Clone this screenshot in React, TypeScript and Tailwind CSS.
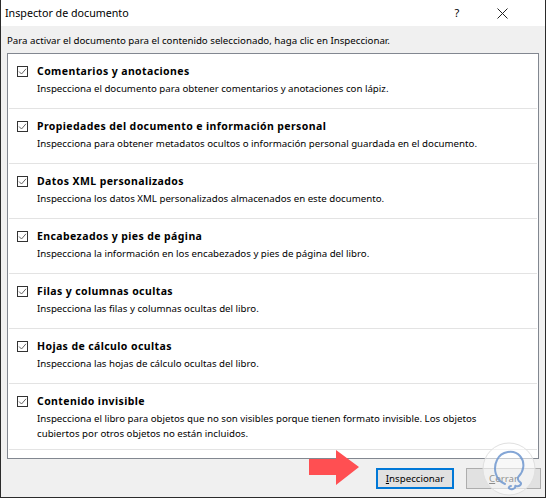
import React from "react";

const items = [
  { t: "Comentarios y anotaciones", d: ["Inspecciona el documento para obtener comentarios y anotaciones con lápiz."] },
  { t: "Propiedades del documento e información personal", d: ["Inspecciona para obtener metadatos ocultos o información personal guardada en el documento."] },
  { t: "Datos XML personalizados", d: ["Inspecciona los datos XML personalizados almacenados en este documento."] },
  { t: "Encabezados y pies de página", d: ["Inspecciona la información en los encabezados y pies de página del libro."] },
  { t: "Filas y columnas ocultas", d: ["Inspecciona las filas y columnas ocultas del libro."] },
  { t: "Hojas de cálculo ocultas", d: ["Inspecciona las hojas de cálculo ocultas del libro."] },
  {
    t: "Contenido invisible",
    d: [
      "Inspecciona el libro para objetos que no son visibles porque tienen formato invisible. Los objetos",
      "cubiertos por otros objetos no están incluidos.",
    ],
  },
];

function Check() {
  return (
    <div className="w-[11px] h-[11px] border border-[#333] bg-white flex items-center justify-center shrink-0">
      <svg width="9" height="9" viewBox="0 0 9 9">
        <path d="M1 4.5 L3.5 7 L8 1.8" fill="none" stroke="#666" strokeWidth="1" />
      </svg>
    </div>
  );
}

export default function App() {
  return (
    <div
      className="w-[546px] h-[498px] bg-[#f0f0f0] border-l border-r border-b border-[#2b2b2b] flex flex-col relative overflow-hidden text-[9.7px] text-black"
      style={{ fontFamily: '"Noto Sans", sans-serif' }}
    >
      <div className="h-[26px] bg-white flex items-center pl-[4px] shrink-0">
        <span className="leading-none text-[10.7px]">Inspector de documento</span>
        <div className="ml-auto flex items-center">
          <span className="w-[20px] text-center text-[11px] mr-[30px]">?</span>
          <svg width="11" height="11" viewBox="0 0 11 11" className="mr-[37px]">
            <path d="M0.5 0.5 L10.5 10.5 M10.5 0.5 L0.5 10.5" stroke="#222" strokeWidth="1" />
          </svg>
        </div>
      </div>
      <div className="pl-[6px] pt-[7px] h-[27px] leading-[16px] shrink-0">
        Para activar el documento para el contenido seleccionado, haga clic en Inspeccionar.
      </div>
      <div className="mx-[6px] h-[406px] border border-[#828790] bg-white shrink-0 flex flex-col">
        {items.map((it, i) => (
          <div
            key={it.t}
            className={
              "border-b border-[#e3e3e3] mx-[1px] pt-[9px] flex flex-col " +
              (i === items.length - 1 ? "pb-[8px]" : "pb-[12px]")
            }
          >
            <div className="flex items-center h-[16px]">
              <div className="ml-[8px] mr-[9px]">
                <Check />
              </div>
              <span className="font-bold leading-[16px] text-[10.5px] tracking-[0.4px]">{it.t}</span>
            </div>
            <div className="pl-[28px] mt-[2px] leading-[15px]">
              {it.d.map((l) => (
                <div key={l} className="whitespace-nowrap">{l}</div>
              ))}
            </div>
          </div>
        ))}
      </div>
      <div className="flex justify-end gap-[12px] pr-[4px] mt-[9px]">
        <button className="w-[78px] h-[21px] border-2 border-[#0078d7] bg-[#e1e1e1] text-[9.7px] leading-none flex items-center justify-center">
          <span><span className="underline">I</span>nspeccionar</span>
        </button>
        <button className="w-[75px] h-[21px] border border-[#adadad] bg-[#e1e1e1] text-[9.7px] leading-none flex items-center justify-center">
          <span><span className="underline">C</span>errar</span>
        </button>
      </div>
      <svg className="absolute left-[305px] top-[448px]" width="56" height="40" viewBox="0 0 56 40">
        <path d="M3 11 L30 11 L30 2 L53 19 L30 37 L30 27 L3 27 Z" fill="#ff4f52" />
      </svg>
      <svg className="absolute left-[480px] top-[440px]" width="60" height="60" viewBox="0 0 60 60">
        <circle cx="28" cy="29" r="26" fill="rgba(255,255,255,0.55)" stroke="#e0e0e0" strokeWidth="1" />
        <path
          d="M24 44 C14 40 12 28 16 20 C20 11 33 9 39 16 C45 23 42 32 38 36 C36 38 37 41 39 42 C42 44 38 47 35 46 C33 45 36 48 32 49 C28 50 26 47 30 46"
          fill="none"
          stroke="#6e97cf"
          strokeWidth="2"
          strokeLinecap="round"
          opacity="0.85"
        />
      </svg>
    </div>
  );
}
